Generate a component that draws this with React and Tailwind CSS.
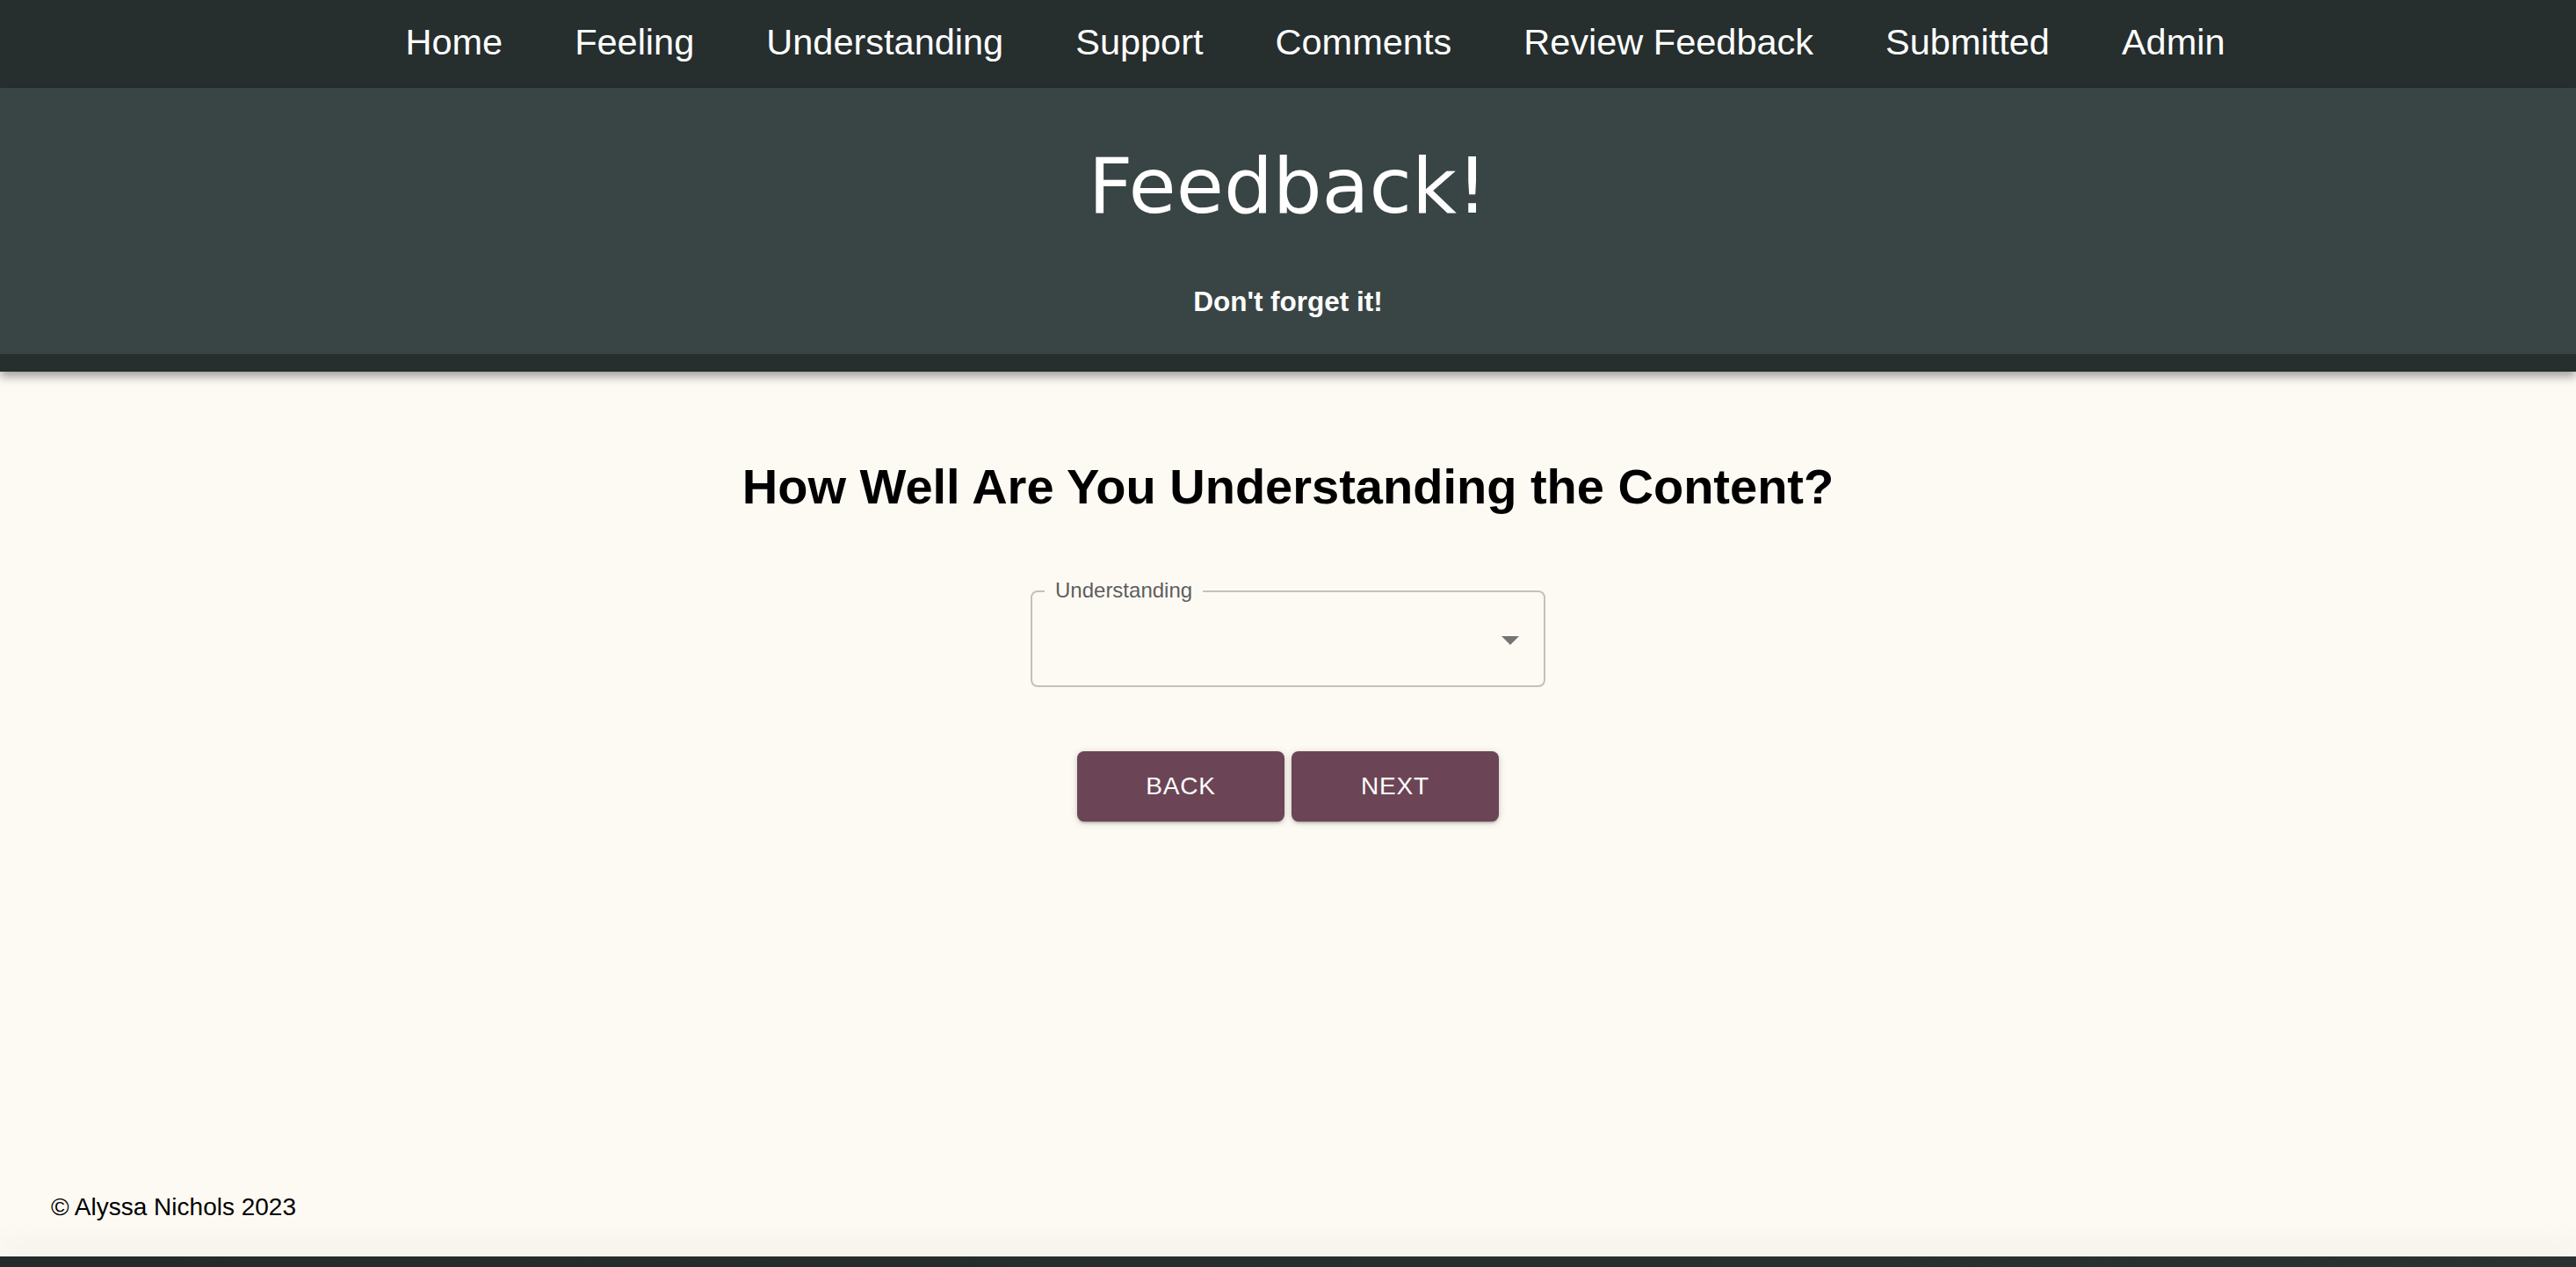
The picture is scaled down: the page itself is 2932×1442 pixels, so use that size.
import { useState } from 'react';

const NAV = ['Home', 'Feeling', 'Understanding', 'Support', 'Comments', 'Review Feedback', 'Submitted', 'Admin'];

const sans = { fontFamily: '"Liberation Sans", Arial, sans-serif' };

export default function App() {
  const [value, setValue] = useState('');

  return (
    <div
      className="min-h-screen flex flex-col bg-[#fdfaf4] text-black font-['Liberation_Sans',Arial,sans-serif]"
    >
      {/* Top navigation */}
      <nav className="h-[100px] bg-[#262e2e] flex items-center justify-center gap-[82px] pl-[62px] pb-[4px]">
        {NAV.map((item) => (
          <a key={item} href="#" className="text-white text-[41.5px] leading-[46px]">
            {item}
          </a>
        ))}
      </nav>

      {/* Header */}
      <header className="relative z-10 bg-[#394545] text-white text-center shadow-[0_6px_10px_rgba(0,0,0,0.35)]">
        <div className="pt-[62px] pb-[42px]">
          <h1 className="text-[88px] leading-[100px] font-['DejaVu_Sans',Verdana,sans-serif]">Feedback!</h1>
          <p className="mt-[63px] text-[31.5px] leading-[36px] font-bold">Don't forget it!</p>
        </div>
        <div className="h-[20px] bg-[#262e2e]" />
      </header>

      {/* Main content */}
      <main className="flex-1 flex flex-col items-center pt-[99px]">
        <h2 className="text-[56px] leading-[64px] font-bold">How Well Are You Understanding the Content?</h2>

        <div className="relative mt-[86px] w-[586px] h-[110px] border-2 border-[#c4c1bc] rounded-[8px]">
          <span className="absolute left-[14px] top-[-14px] px-[12px] bg-[#fdfaf4] text-[24px] leading-[24px] text-[#5e5e5e]">
            Understanding
          </span>
          <select
            value={value}
            onChange={(e) => setValue(e.target.value)}
            className="w-full h-full appearance-none bg-transparent outline-none px-[28px] text-[32px]"
            style={sans}
          >
            <option value="" />
            <option value="1">1</option>
            <option value="2">2</option>
            <option value="3">3</option>
            <option value="4">4</option>
            <option value="5">5</option>
          </select>
          <svg
            viewBox="0 0 24 24"
            className="pointer-events-none absolute right-[14px] top-[30px] w-[48px] h-[48px] fill-[#757575]"
          >
            <path d="M7 10l5 5 5-5z" />
          </svg>
        </div>

        <div className="mt-[73px] flex gap-[8px]">
          {['BACK', 'NEXT'].map((label) => (
            <button
              key={label}
              className="w-[236px] h-[80px] rounded-[8px] bg-[#6b4556] text-white text-[28px] tracking-[0.8px] shadow-[0_3px_2px_-2px_rgba(0,0,0,0.2),0_2px_4px_rgba(0,0,0,0.14),0_1px_10px_rgba(0,0,0,0.12)]"
            >
              {label}
            </button>
          ))}
        </div>
      </main>

      {/* Footer */}
      <footer className="pl-[58px] pb-[40px] text-[28px] leading-[32px]">© Alyssa Nichols 2023</footer>
      <div className="h-[12px] bg-gradient-to-r from-[#232a29] to-[#2a3231] shadow-[0_-14px_30px_rgba(0,0,0,0.07)]" />
    </div>
  );
}
